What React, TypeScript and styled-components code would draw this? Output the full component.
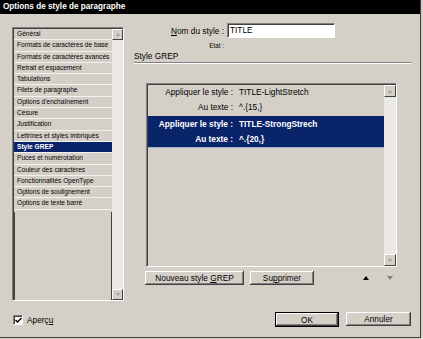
import React from 'react';
import styled, { createGlobalStyle } from 'styled-components';

const Global = createGlobalStyle`
  html, body { margin: 0; padding: 0; background: #d4d0c8; }
  body { font-family: "Liberation Sans", Arial, sans-serif; }
`;

const FACE = '#d4d0c8';
const NAVY = '#0a246a';

const Win = styled.div`
  width: 421px;
  height: 338px;
  box-sizing: border-box;
  background: ${FACE};
  border-right: 1px solid #404040;
  border-bottom: 1px solid #404040;
  display: flex;
  flex-direction: column;
  font-family: "Liberation Sans", Arial, sans-serif;
  color: #000;
  overflow: hidden;
`;

const TitleBar = styled.div`
  height: 14px;
  background: #000;
  color: #fff;
  font-weight: bold;
  font-size: 8.2px;
  line-height: 14px;
  padding-left: 3px;
  white-space: nowrap;
`;

const Body = styled.div`
  flex: 1;
  display: flex;
`;

const LeftCol = styled.div`
  width: 112px;
  margin-left: 12px;
  padding-top: 13px;
  display: flex;
  flex-direction: column;
`;

const Sunken = styled.div<{ $w?: number; $h: number }>`
  box-sizing: border-box;
  height: ${p => p.$h}px;
  ${p => (p.$w ? `width: ${p.$w}px;` : '')}
  border: 1px solid;
  border-color: #808080 #fff #fff #808080;
  display: flex;
`;

const SunkenInner = styled.div`
  flex: 1;
  display: flex;
  border: 1px solid;
  border-color: #404040 ${FACE} ${FACE} #404040;
  border-width: 1px 0 0 1px;
  min-width: 0;
`;

const NavList = styled.div`
  flex: 1;
  display: flex;
  flex-direction: column;
  min-width: 0;
`;

const NavItem = styled.div<{ $sel?: boolean }>`
  height: 10.3px;
  line-height: 10.3px;
  border-bottom: 1px solid #f2f1ee;
  padding-left: 3px;
  font-family: "Liberation Sans Narrow", "Liberation Sans", Arial, sans-serif;
  font-size: 6.6px;
  white-space: nowrap;
  overflow: hidden;
  background: ${p => (p.$sel ? NAVY : FACE)};
  color: ${p => (p.$sel ? '#fff' : '#000')};
  font-weight: ${p => (p.$sel ? 'bold' : 'normal')};
`;

const NavFiller = styled.div`
  flex: 1;
  margin-top: 2px;
  border-left: 1px solid #404040;
  border-right: 1px solid #404040;
`;

const ScrollBar = styled.div<{ $w: number }>`
  width: ${p => p.$w}px;
  display: flex;
  flex-direction: column;
  background: #ebe9e5;
`;

const ScrollBtn = styled.div<{ $h: number }>`
  height: ${p => p.$h}px;
  box-sizing: border-box;
  background: ${FACE};
  border: 1px solid;
  border-color: #fff #404040 #404040 #fff;
  display: flex;
  align-items: center;
  justify-content: center;
`;

const ScrollTrack = styled.div`
  flex: 1;
`;

const Arrow = styled.div<{ $dir: 'up' | 'down'; $color: string; $size: number }>`
  width: 0;
  height: 0;
  border-left: ${p => p.$size}px solid transparent;
  border-right: ${p => p.$size}px solid transparent;
  ${p =>
    p.$dir === 'up'
      ? `border-bottom: ${p.$size + 1}px solid ${p.$color};`
      : `border-top: ${p.$size + 1}px solid ${p.$color};`}
`;

const CheckRow = styled.label`
  margin-top: 14px;
  margin-left: 1px;
  display: flex;
  align-items: center;
  gap: 4px;
  font-size: 8.3px;
`;

const CheckBox = styled.span`
  width: 10px;
  height: 10px;
  box-sizing: border-box;
  background: #fff;
  border: 1px solid;
  border-color: #808080 #fff #fff #808080;
  box-shadow: inset 1px 1px #404040;
  display: flex;
  align-items: center;
  justify-content: center;
`;

const RightCol = styled.div`
  width: 279px;
  margin-left: 10px;
  padding-top: 9px;
  display: flex;
  flex-direction: column;
`;

const FieldRow = styled.div`
  display: flex;
  align-items: center;
  height: 15px;
`;

const FieldLabel = styled.div<{ $small?: boolean }>`
  width: 90px;
  text-align: right;
  font-size: ${p => (p.$small ? '6.3px' : '8.3px')};
  white-space: nowrap;
`;

const Input = styled.div`
  margin-left: 3px;
  width: 108px;
  height: 15px;
  box-sizing: border-box;
  background: #fff;
  border: 1px solid;
  border-color: #808080 #fff #fff #808080;
  box-shadow: inset 1px 1px #404040;
  font-size: 8.3px;
  line-height: 13px;
  padding-left: 2px;
`;

const StateRow = styled.div`
  display: flex;
  height: 9px;
  align-items: center;
  margin-top: 3px;
`;

const SectionTitle = styled.div`
  margin-top: 1px;
  font-size: 8.3px;
  line-height: 10px;
  height: 10px;
`;

const Groove = styled.div`
  margin-top: 1px;
  width: 277px;
  height: 0;
  border-top: 1px solid #808080;
  border-bottom: 1px solid #fff;
`;

const GrepBox = styled.div`
  margin-top: 19px;
  margin-left: 12px;
`;

const GrepList = styled.div`
  flex: 1;
  display: flex;
  flex-direction: column;
`;

const GrepItem = styled.div<{ $sel?: boolean }>`
  display: grid;
  grid-template-columns: 85px 1fr;
  column-gap: 6px;
  padding: ${p => (p.$sel ? '1px 0 0' : '0')};
  background: ${p => (p.$sel ? NAVY : FACE)};
  color: ${p => (p.$sel ? '#fff' : '#000')};
  font-weight: ${p => (p.$sel ? 'bold' : 'normal')};
  border-bottom: 1px solid ${p => (p.$sel ? '#a8b0c8' : FACE)};
  font-size: 8.3px;
  line-height: 15px;
  white-space: nowrap;
`;

const GrepLabel = styled.span`
  text-align: right;
`;

const ButtonRow = styled.div`
  margin-top: 4px;
  margin-left: 11px;
  display: flex;
  align-items: center;
`;

const Button = styled.button<{ $w: number; $default?: boolean; $gap?: number }>`
  width: ${p => p.$w}px;
  height: ${p => (p.$default ? 15 : 14)}px;
  margin-left: ${p => p.$gap ?? 0}px;
  box-sizing: border-box;
  padding: 0;
  background: ${FACE};
  font-family: "Liberation Sans", Arial, sans-serif;
  font-size: 8.3px;
  color: #000;
  border: ${p => (p.$default ? '1px solid #000' : '0')};
  box-shadow: inset -1px -1px #404040, inset 1px 1px #fff, inset -2px -2px #808080;
  display: flex;
  align-items: center;
  justify-content: center;
  white-space: nowrap;
`;

const U = styled.span`
  text-decoration: underline;
`;

const MoveBtns = styled.div`
  margin-left: 49px;
  display: flex;
  gap: 18px;
  align-items: center;
`;

const Spacer = styled.div`
  flex: 1;
`;

const FooterRow = styled.div`
  display: flex;
  justify-content: flex-end;
  gap: 7px;
  margin-right: 2px;
  margin-bottom: 10px;
`;

const navItems = [
  'Général',
  'Formats de caractères de base',
  'Formats de caractères avancés',
  'Retrait et espacement',
  'Tabulations',
  'Filets de paragraphe',
  "Options d'enchaînement",
  'Césure',
  'Justification',
  'Lettrines et styles imbriqués',
  'Style GREP',
  'Puces et numérotation',
  'Couleur des caractères',
  'Fonctionnalités OpenType',
  'Options de soulignement',
  'Options de texte barré',
];

const grepStyles = [
  { style: 'TITLE-LightStretch', text: '^.{15,}', sel: false },
  { style: 'TITLE-StrongStrech', text: '^.{20,}', sel: true },
];

function Scroll({ w }: { w: number }) {
  return (
    <ScrollBar $w={w}>
      <ScrollBtn $h={w}>
        <Arrow $dir="up" $color="#a0a0a0" $size={2} />
      </ScrollBtn>
      <ScrollTrack />
      <ScrollBtn $h={w}>
        <Arrow $dir="down" $color="#a0a0a0" $size={2} />
      </ScrollBtn>
    </ScrollBar>
  );
}

export default function App() {
  return (
    <>
      <Global />
      <Win>
        <TitleBar>Options de style de paragraphe</TitleBar>
        <Body>
          <LeftCol>
            <Sunken $h={274}>
              <SunkenInner>
                <NavList>
                  {navItems.map(n => (
                    <NavItem key={n} $sel={n === 'Style GREP'}>
                      {n}
                    </NavItem>
                  ))}
                  <NavFiller />
                </NavList>
                <Scroll w={11} />
              </SunkenInner>
            </Sunken>
            <CheckRow>
              <CheckBox>
                <svg width="7" height="7" viewBox="0 0 7 7">
                  <path d="M0.5 3 L2.5 5 L6.5 1" stroke="#000" strokeWidth="1.4" fill="none" />
                </svg>
              </CheckBox>
              <span>
                Aperç<U>u</U>
              </span>
            </CheckRow>
          </LeftCol>
          <RightCol>
            <FieldRow>
              <FieldLabel>
                <U>N</U>om du style :
              </FieldLabel>
              <Input>TITLE</Input>
            </FieldRow>
            <StateRow>
              <FieldLabel $small>Etat :</FieldLabel>
            </StateRow>
            <SectionTitle>Style GREP</SectionTitle>
            <Groove />
            <GrepBox>
              <Sunken $w={251} $h={184}>
                <SunkenInner>
                  <GrepList>
                    {grepStyles.map(g => (
                      <GrepItem key={g.style} $sel={g.sel}>
                        <GrepLabel>Appliquer le style :</GrepLabel>
                        <span>{g.style}</span>
                        <GrepLabel>Au texte :</GrepLabel>
                        <span>{g.text}</span>
                      </GrepItem>
                    ))}
                  </GrepList>
                  <Scroll w={12} />
                </SunkenInner>
              </Sunken>
            </GrepBox>
            <ButtonRow>
              <Button $w={99}>
                <span>
                  Nouveau style <U>G</U>REP
                </span>
              </Button>
              <Button $w={64} $gap={6}>
                <span>
                  Su<U>p</U>primer
                </span>
              </Button>
              <MoveBtns>
                <Arrow $dir="up" $color="#000" $size={3} />
                <Arrow $dir="down" $color="#808080" $size={3} />
              </MoveBtns>
            </ButtonRow>
            <Spacer />
            <FooterRow>
              <Button $w={64} $default>
                OK
              </Button>
              <Button $w={65}>Annuler</Button>
            </FooterRow>
          </RightCol>
        </Body>
      </Win>
    </>
  );
}
